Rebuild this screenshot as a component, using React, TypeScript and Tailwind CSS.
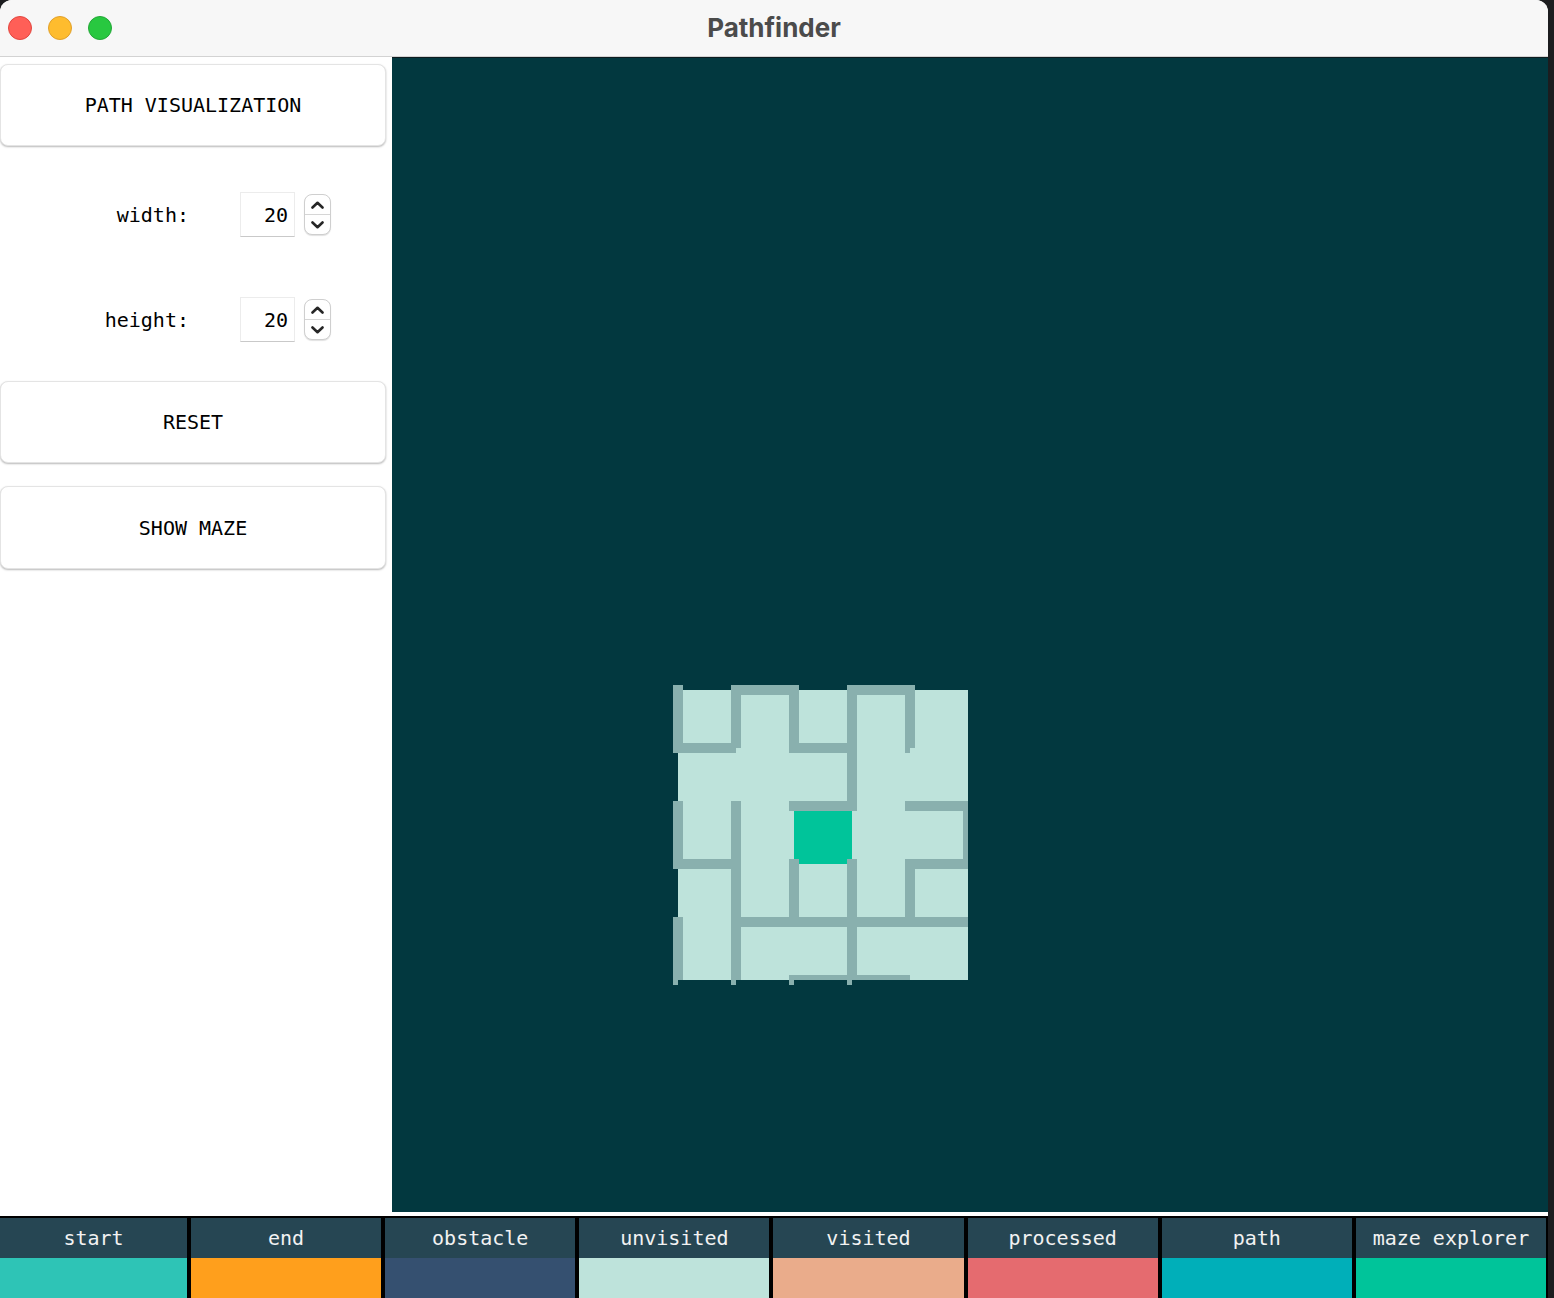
import type { ReactNode } from "react";

const mono = { fontFamily: '"DejaVu Sans Mono", "Liberation Mono", monospace' };

const legend = [
  { label: "start", swatch: "bg-[#2ec4b6]" },
  { label: "end", swatch: "bg-[#ff9f1c]" },
  { label: "obstacle", swatch: "bg-[#355070]" },
  { label: "unvisited", swatch: "bg-[#bee3db]" },
  { label: "visited", swatch: "bg-[#eaac8b]" },
  { label: "processed", swatch: "bg-[#e56b6f]" },
  { label: "path", swatch: "bg-[#00afb9]" },
  { label: "maze explorer", swatch: "bg-[#00c49a]" },
];

// wall rects in page coords: [x1, y1, x2, y2]
const walls: number[][] = [
  [673, 685, 683, 753],
  [673, 743, 736, 753],
  [731, 685, 741, 748],
  [731, 685, 799, 695],
  [789, 685, 799, 753],
  [789, 743, 857, 753],
  [847, 685, 915, 695],
  [847, 685, 857, 806],
  [905, 685, 915, 748],
  [905, 748, 910, 753],
  [673, 801, 683, 869],
  [731, 801, 741, 980],
  [731, 980, 736, 985],
  [789, 801, 857, 811],
  [905, 801, 968, 811],
  [963, 811, 968, 869],
  [673, 859, 741, 869],
  [789, 859, 799, 922],
  [847, 859, 857, 980],
  [847, 980, 852, 985],
  [905, 859, 968, 869],
  [905, 859, 915, 922],
  [731, 917, 968, 927],
  [673, 917, 683, 980],
  [673, 980, 678, 985],
  [789, 975, 910, 980],
  [789, 980, 794, 985],
];

function PanelButton({ children, className }: { children: ReactNode; className?: string }) {
  return (
    <button
      className={
        "flex w-[386px] items-center justify-center rounded-[8px] border border-[#e4e4e4] bg-white text-[20px] text-black shadow-[0_1px_2px_rgba(0,0,0,0.28)] " +
        (className ?? "")
      }
      style={mono}
    >
      {children}
    </button>
  );
}

function Stepper() {
  return (
    <div className="ml-[9px] flex h-[41px] w-[27px] flex-col overflow-hidden rounded-[8px] border border-[#cfcfcf] bg-white shadow-[0_1px_1px_rgba(0,0,0,0.12)]">
      <div className="flex flex-1 items-center justify-center">
        <svg width="13" height="8" viewBox="0 0 13 8">
          <polyline points="1.5,6.5 6.5,1.8 11.5,6.5" fill="none" stroke="#262626" strokeWidth="2.6" strokeLinecap="round" strokeLinejoin="round" />
        </svg>
      </div>
      <div className="h-px bg-[#d6d6d6]" />
      <div className="flex flex-1 items-center justify-center">
        <svg width="13" height="8" viewBox="0 0 13 8">
          <polyline points="1.5,1.5 6.5,6.2 11.5,1.5" fill="none" stroke="#262626" strokeWidth="2.6" strokeLinecap="round" strokeLinejoin="round" />
        </svg>
      </div>
    </div>
  );
}

function NumberRow({ label, className }: { label: string; className?: string }) {
  return (
    <div className={"flex items-center " + (className ?? "")}>
      <span className="w-[189px] text-right text-[20px] text-black" style={mono}>
        {label}
      </span>
      <div
        className="ml-[51px] flex h-[45px] w-[55px] items-center justify-end border border-[#ececec] border-b-[#c9c9c9] bg-white pr-[6px] text-[20px] text-black"
        style={mono}
      >
        20
      </div>
      <Stepper />
    </div>
  );
}

export default function App() {
  return (
    <div className="h-[1298px] w-[1554px] overflow-hidden bg-[#1c1d1f]">
      <div className="flex h-[1298px] w-[1548px] flex-col overflow-hidden rounded-t-[12px] bg-white">
        {/* title bar */}
        <div className="relative flex h-[57px] items-center justify-center border-b border-[#d3d3d3] bg-[#f7f7f7] pb-[2px]">
          <div className="absolute left-[8px] top-[16px] flex gap-[16px]">
            <span className="h-[24px] w-[24px] rounded-full border border-[#e2463f] bg-[#ff5f57]" />
            <span className="h-[24px] w-[24px] rounded-full border border-[#e1a02a] bg-[#febc2e]" />
            <span className="h-[24px] w-[24px] rounded-full border border-[#23a737] bg-[#28c840]" />
          </div>
          <span
            className="text-[26px] font-bold text-[#4b4b4b]"
            style={{ fontFamily: 'Inter, "Open Sans", sans-serif' }}
          >
            Pathfinder
          </span>
        </div>

        {/* body */}
        <div className="flex h-[1155px]">
          <div className="flex w-[392px] flex-col bg-white">
            <PanelButton className="mt-[7px] h-[82px]">PATH VISUALIZATION</PanelButton>
            <NumberRow label="width:" className="mt-[46px]" />
            <NumberRow label="height:" className="mt-[60px]" />
            <PanelButton className="mt-[39px] h-[82px]">RESET</PanelButton>
            <PanelButton className="mt-[23px] h-[83px]">SHOW MAZE</PanelButton>
          </div>
          <div className="w-[1156px] border-t border-[#0c1c1f] bg-[#02383f]">
            <svg width="1156" height="1154" viewBox="392 58 1156 1154" className="block">
              <rect x="678" y="690" width="290" height="290" fill="#bee3db" />
              <rect x="794" y="811" width="58" height="53" fill="#00c49a" />
              {walls.map(([x1, y1, x2, y2], i) => (
                <rect key={i} x={x1} y={y1} width={x2 - x1} height={y2 - y1} fill="#89b0ae" />
              ))}
            </svg>
          </div>
        </div>

        {/* legend */}
        <div className="mt-[4px] flex flex-1 gap-[4px] border-t-2 border-black bg-black pr-[2px]">
          {legend.map((l, i) => (
            <div key={l.label} className={"flex flex-col " + (i === 0 ? "w-[187px]" : "flex-1")}>
              <div
                className="flex h-[40px] items-center justify-center bg-[#264653] text-[20px] text-[#f2f2f2]"
                style={mono}
              >
                {l.label}
              </div>
              <div className={"flex-1 " + l.swatch} />
            </div>
          ))}
        </div>
      </div>
    </div>
  );
}
